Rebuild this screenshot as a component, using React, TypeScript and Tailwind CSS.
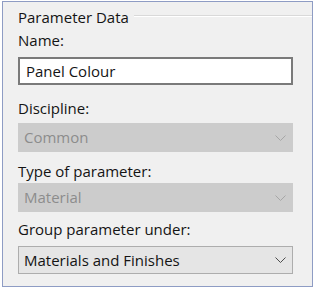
import React from 'react'

const font = { fontFamily: '"Open Sans", "Noto Sans", sans-serif' }

const Chevron: React.FC<{ color: string }> = ({ color }) => (
  <svg width="11" height="6" viewBox="0 0 11 6" fill="none">
    <polyline points="0.5,0.5 5.5,5.5 10.5,0.5" stroke={color} strokeWidth="1" />
  </svg>
)

const Label: React.FC<{ text: string; className: string }> = ({ text, className }) => (
  <div className={`flex h-[24px] items-center text-[15px] text-[#141414] ${className}`}>{text}</div>
)

const Select: React.FC<{ value: string; disabled?: boolean; className: string }> = ({ value, disabled, className }) => (
  <div
    className={`flex w-[275px] items-center justify-between border pl-[5px] pr-[6px] text-[15px] ${
      disabled ? 'border-[#cccccc] bg-[#cccccc] text-[#8c8c8c]' : 'border-[#adadad] bg-[#e5e5e5] text-[#141414]'
    } ${className}`}
  >
    <span>{value}</span>
    <Chevron color={disabled ? '#a6a6a6' : '#4d4d4d'} />
  </div>
)

export default function App() {
  return (
    <div className="h-[289px] w-[315px] bg-white pt-[1px] pl-[2px]" style={font}>
      <div className="flex h-[286px] w-[311px] flex-col border border-[#8e9cc4] bg-[#f0f0f0]">
        <div className="flex h-[27px] items-center">
          <span className="ml-[14px] px-[1px] pt-[4px] text-[15px] text-[#141414]">Parameter Data</span>
          <div className="ml-[4px] h-[2px] flex-1 border-t border-b border-t-[#d9d9d9] border-b-white" />
        </div>
        <div className="ml-[15px] flex flex-col">
          <Label text="Name:" className="-mt-[1px]" />
          <div className="mt-[5px] flex h-[28px] w-[275px] items-center border-2 border-[#7a7a7a] bg-white pl-[6px] text-[15px] text-[#141414]">
            Panel Colour
          </div>
          <Label text="Discipline:" className="mt-[11px]" />
          <Select value="Common" disabled className="mt-[3px] h-[29px]" />
          <Label text="Type of parameter:" className="mt-[7px]" />
          <Select value="Material" disabled className="h-[29px]" />
          <Label text="Group parameter under:" className="mt-[5px]" />
          <Select value="Materials and Finishes" className="mt-[5px] h-[28px]" />
        </div>
      </div>
    </div>
  )
}
